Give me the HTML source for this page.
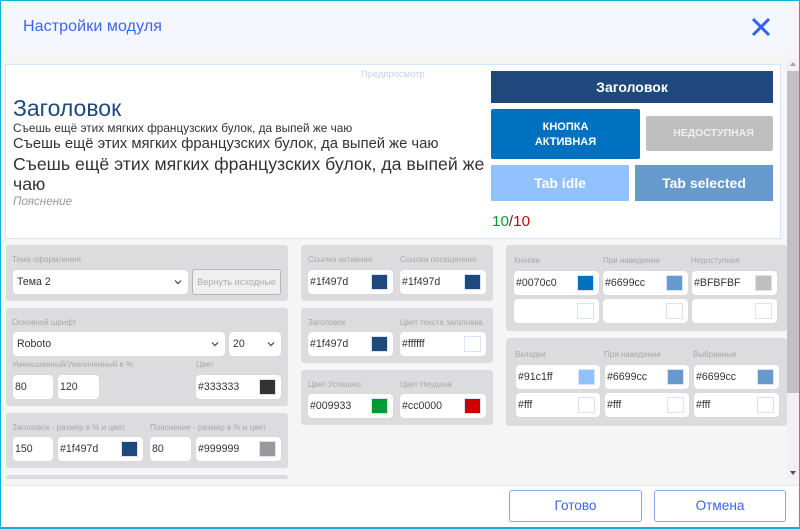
<!DOCTYPE html>
<html lang="ru"><head><meta charset="utf-8"><title>Настройки модуля</title>
<style>
html,body{margin:0;padding:0}
body{width:800px;height:529px;position:relative;overflow:hidden;background:#fff;font-family:"Liberation Sans",sans-serif;filter:blur(.3px)}
div,span.a,svg{position:absolute;box-sizing:border-box}
.t{white-space:nowrap}
.p{background:#dcdcde;border-radius:3px}
.l{font-size:8px;line-height:12px;color:#a8a8aa;white-space:nowrap}
.f{background:#fff;border-radius:4px;height:24px;font-size:10.6px;line-height:25px;color:#333;padding-left:2px;white-space:nowrap;box-shadow:0 0 1px #ccc}
.s{width:17px;height:16px;top:4px;right:5px;border:1px solid #d8e2fa;background:#fff}
.sel{padding-left:4px;font-size:10.6px}
.ar{right:6px;top:9px;width:8px;height:6px}
.c{text-align:center;color:#fff;font-weight:bold;white-space:nowrap}
</style></head><body>
<div style="left:0;top:0;width:800px;height:529px;background:#f5f5f5"></div>
<div style="left:8px;top:2px;width:782px;height:50px;background:#f5f7fe"></div>
<div class="t" style="left:23px;top:17px;font-size:16px;line-height:19px;color:#3a66f6;letter-spacing:.1px">Настройки модуля</div>
<svg style="left:750px;top:16px" width="22" height="22" viewBox="0 0 22 22"><path d="M3 3L19 19M19 3L3 19" stroke="#3060f5" stroke-width="3" fill="none"/></svg>

<div style="left:5px;top:64px;width:776px;height:175px;background:#fff;border:1px solid #d6e4fb"></div>
<div class="t" style="left:361px;top:68px;font-size:9.4px;line-height:12px;color:#c6d0e8">Предпросмотр</div>
<div class="t" style="left:13px;top:96px;font-size:23px;line-height:25px;color:#1f497d">Заголовок</div>
<div class="t" style="left:13px;top:121px;font-size:11.8px;line-height:14px;color:#333">Съешь ещё этих мягких французских булок, да выпей же чаю</div>
<div class="t" style="left:13px;top:136px;font-size:14.8px;line-height:17px;color:#333">Съешь ещё этих мягких французских булок, да выпей же чаю</div>
<div class="t" style="left:13px;top:154px;font-size:17.7px;line-height:20px;color:#333">Съешь ещё этих мягких французских булок, да выпей же</div>
<div class="t" style="left:13px;top:174px;font-size:17.7px;line-height:20px;color:#333">чаю</div>
<div class="t" style="left:13px;top:195px;font-size:11.7px;line-height:14px;color:#999;font-style:italic">Пояснение</div>

<div class="c" style="left:491px;top:71px;width:282px;height:32px;background:#1f497d;font-size:14px;line-height:32px">Заголовок</div>
<div class="c" style="left:491px;top:109px;width:149px;height:50px;background:#0070c0;border-radius:2px;font-size:11px;line-height:15px;padding-top:11px">КНОПКА<br>АКТИВНАЯ</div>
<div class="c" style="left:646px;top:116px;width:127px;height:35px;background:#bfbfbf;border-radius:2px;font-size:10.5px;line-height:35px;color:#eee;padding-left:8px">НЕДОСТУПНАЯ</div>
<div class="c" style="left:491px;top:165px;width:138px;height:36px;background:#91c1ff;font-size:14px;line-height:36px">Tab idle</div>
<div class="c" style="left:635px;top:165px;width:138px;height:36px;background:#6699cc;font-size:14px;line-height:36px">Tab selected</div>
<div class="t" style="left:492px;top:213px;font-size:15.2px;line-height:18px;color:#333"><span style="color:#009933">10</span>/<span style="color:#cc0000">10</span></div>

<!-- left column -->
<div class="p" style="left:6px;top:245px;width:282px;height:56px"></div>
<div class="l" style="left:12px;top:254px">Тема оформления</div>
<div class="f sel" style="left:13px;top:270px;width:175px">Тема 2<svg class="ar" viewBox="0 0 8 6"><path d="M1 1.5L4 4.5L7 1.5" stroke="#444" stroke-width="1.2" fill="none"/></svg></div>
<div style="left:192px;top:269px;width:89px;height:26px;background:#efefef;border:1px solid #b5b5b5;border-radius:3px;font-size:9.2px;line-height:24px;color:#adadad;text-align:center;white-space:nowrap">Вернуть исходные</div>

<div class="p" style="left:6px;top:308px;width:282px;height:98px"></div>
<div class="l" style="left:12px;top:317px">Основной шрифт</div>
<div class="f sel" style="left:13px;top:332px;width:212px">Roboto<svg class="ar" viewBox="0 0 8 6"><path d="M1 1.5L4 4.5L7 1.5" stroke="#444" stroke-width="1.2" fill="none"/></svg></div>
<div class="f sel" style="left:229px;top:332px;width:52px">20<svg class="ar" viewBox="0 0 8 6"><path d="M1 1.5L4 4.5L7 1.5" stroke="#444" stroke-width="1.2" fill="none"/></svg></div>
<div class="l" style="left:12px;top:359px">Уменьшенный/Увеличенный в %</div>
<div class="l" style="left:196px;top:359px">Цвет</div>
<div class="f" style="left:13px;top:375px;width:40px">80</div>
<div class="f" style="left:58px;top:375px;width:41px">120</div>
<div class="f" style="left:196px;top:375px;width:85px">#333333<div class="s" style="background:#333"></div></div>

<div class="p" style="left:6px;top:413px;width:282px;height:55px"></div>
<div class="l" style="left:12px;top:422px">Заголовок - размер в % и цвет</div>
<div class="l" style="left:150px;top:422px">Пояснение - размер в % и цвет</div>
<div class="f" style="left:13px;top:437px;width:40px">150</div>
<div class="f" style="left:58px;top:437px;width:85px">#1f497d<div class="s" style="background:#1f497d"></div></div>
<div class="f" style="left:150px;top:437px;width:41px">80</div>
<div class="f" style="left:196px;top:437px;width:85px">#999999<div class="s" style="background:#999"></div></div>
<div class="p" style="left:6px;top:475px;width:282px;height:4px;border-radius:3px 3px 0 0"></div>

<!-- middle column -->
<div class="p" style="left:301px;top:245px;width:192px;height:56px"></div>
<div class="l" style="left:308px;top:254px">Ссылка активная</div>
<div class="l" style="left:400px;top:254px">Ссылка посещенная</div>
<div class="f" style="left:308px;top:270px;width:85px">#1f497d<div class="s" style="background:#1f497d"></div></div>
<div class="f" style="left:400px;top:270px;width:86px">#1f497d<div class="s" style="background:#1f497d"></div></div>

<div class="p" style="left:301px;top:308px;width:192px;height:55px"></div>
<div class="l" style="left:308px;top:317px">Заголовок</div>
<div class="l" style="left:400px;top:317px">Цвет текста заголовка</div>
<div class="f" style="left:308px;top:332px;width:85px">#1f497d<div class="s" style="background:#1f497d"></div></div>
<div class="f" style="left:400px;top:332px;width:86px">#ffffff<div class="s"></div></div>

<div class="p" style="left:301px;top:370px;width:192px;height:55px"></div>
<div class="l" style="left:308px;top:379px">Цвет Успешно</div>
<div class="l" style="left:400px;top:379px">Цвет Неудача</div>
<div class="f" style="left:308px;top:394px;width:85px">#009933<div class="s" style="background:#009933"></div></div>
<div class="f" style="left:400px;top:394px;width:86px">#cc0000<div class="s" style="background:#cc0000"></div></div>

<!-- right column -->
<div class="p" style="left:506px;top:245px;width:281px;height:86px"></div>
<div class="l" style="left:514px;top:255px">Кнопки</div>
<div class="l" style="left:603px;top:255px">При наведении</div>
<div class="l" style="left:691px;top:255px">Недоступная</div>
<div class="f" style="left:514px;top:271px;width:85px">#0070c0<div class="s" style="background:#0070c0"></div></div>
<div class="f" style="left:603px;top:271px;width:85px">#6699cc<div class="s" style="background:#6699cc"></div></div>
<div class="f" style="left:692px;top:271px;width:85px">#BFBFBF<div class="s" style="background:#bfbfbf"></div></div>
<div class="f" style="left:514px;top:299px;width:85px"><div class="s"></div></div>
<div class="f" style="left:603px;top:299px;width:85px"><div class="s"></div></div>
<div class="f" style="left:692px;top:299px;width:85px"><div class="s"></div></div>

<div class="p" style="left:506px;top:338px;width:281px;height:88px"></div>
<div class="l" style="left:515px;top:349px">Вкладки</div>
<div class="l" style="left:604px;top:349px">При наведении</div>
<div class="l" style="left:693px;top:349px">Выбранные</div>
<div class="f" style="left:516px;top:365px;width:84px">#91c1ff<div class="s" style="background:#91c1ff"></div></div>
<div class="f" style="left:605px;top:365px;width:84px">#6699cc<div class="s" style="background:#6699cc"></div></div>
<div class="f" style="left:694px;top:365px;width:85px">#6699cc<div class="s" style="background:#6699cc"></div></div>
<div class="f" style="left:516px;top:393px;width:84px">#fff<div class="s"></div></div>
<div class="f" style="left:605px;top:393px;width:84px">#fff<div class="s"></div></div>
<div class="f" style="left:694px;top:393px;width:85px">#fff<div class="s"></div></div>

<!-- scrollbar -->
<div style="left:787px;top:58px;width:12px;height:421px;background:#f1f1f1"></div>
<div style="left:787px;top:71px;width:12px;height:322px;background:#c1c1c1"></div>
<svg style="left:789px;top:61px" width="8" height="6" viewBox="0 0 8 6"><path d="M4 1L7 5H1Z" fill="#a3a3a3"/></svg>
<svg style="left:789px;top:470px" width="8" height="6" viewBox="0 0 8 6"><path d="M4 5L7 1H1Z" fill="#505050"/></svg>

<!-- footer -->
<div style="left:0;top:485px;width:800px;height:44px;background:#fff;border-top:1px solid #e8e8e8"></div>
<div style="left:509px;top:490px;width:133px;height:32px;background:#fff;border:1px solid #8aa5f8;border-radius:3px;color:#3a66f6;font-size:13.6px;line-height:30px;text-align:center">Готово</div>
<div style="left:654px;top:490px;width:132px;height:32px;background:#fff;border:1px solid #8aa5f8;border-radius:3px;color:#3a66f6;font-size:13.6px;line-height:30px;text-align:center">Отмена</div>

<!-- window border -->
<div style="left:0;top:0;width:800px;height:529px;border:1px solid #0fb3d9;border-bottom-width:2px"></div>
</body></html>
